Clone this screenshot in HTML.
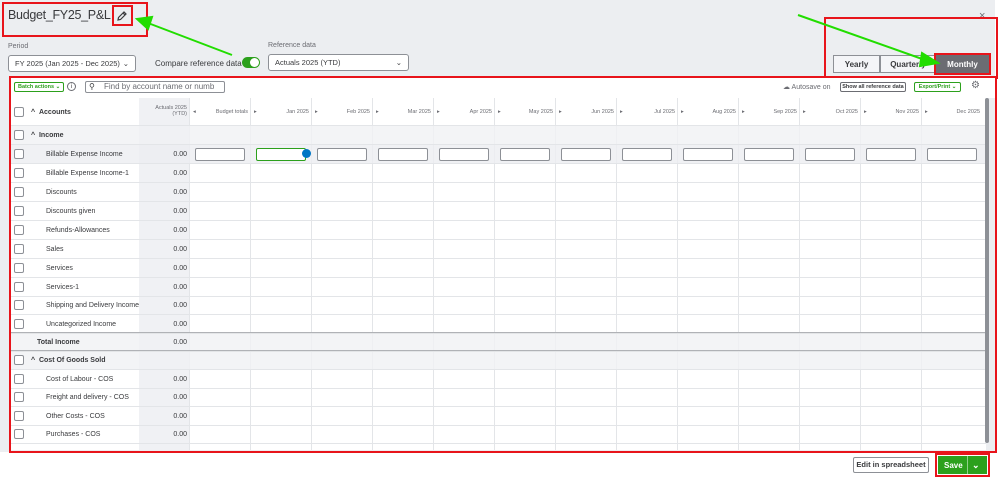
<!DOCTYPE html>
<html><head><meta charset="utf-8"><style>
*{box-sizing:border-box;margin:0;padding:0}
body{width:999px;height:479px;overflow:hidden;background:#fff;font-family:"Liberation Sans",sans-serif;color:#393a3d;position:relative}
.top{position:absolute;left:0;top:0;width:995px;height:452px;background:#eceef1}
.abs{position:absolute;white-space:nowrap}
.red{position:absolute;border:2px solid #e8141b}
.sel{border:1px solid #8d9096;background:#fff;border-radius:3px;font-size:7.5px;padding:0 6px;display:flex;align-items:center;justify-content:space-between;white-space:nowrap}
.lbl{font-size:7px;color:#6b6c72}
.grid{position:absolute;left:11px;top:98px;width:975px;height:352px;background:#fff;overflow:hidden}
.row{position:absolute;left:0;width:975px;height:19px;border-bottom:1px solid #e3e5e8;font-size:7px;white-space:nowrap}
.cb{position:absolute;left:3px;top:4px;width:10px;height:10px;border:1px solid #8d9096;border-radius:2px;background:#fff}
.vl{position:absolute;top:0;width:1px;height:352px;background:#e3e5e8}
.nm{position:absolute;left:35px;top:6px}
.val{position:absolute;left:128px;width:48px;text-align:right;top:6px}
.inp{position:absolute;top:3px;height:13px;width:50px;border:1px solid #8d9096;border-radius:2px;background:#fff}
.mh{position:absolute;top:11px;font-size:5.5px;color:#6b6c72;display:flex;justify-content:space-between;width:55px}
.btn{position:absolute;display:flex;align-items:center;justify-content:center;font-size:8px;font-weight:bold}
</style></head><body>
<div class="top"></div>
<div class="abs" style="left:8px;top:8px;font-size:12.5px;letter-spacing:-0.3px;color:#393a3d">Budget_FY25_P&amp;L</div>
<svg class="abs" style="left:116px;top:10px" width="12" height="12" viewBox="0 0 12 12"><path d="M2 10 L2.5 7.5 L8 2 L10 4 L4.5 9.5 Z M7 3 L9 5" fill="none" stroke="#393a3d" stroke-width="1.2"/></svg>
<div class="red" style="left:2px;top:2px;width:146px;height:35px"></div>
<div class="red" style="left:112px;top:5px;width:21px;height:21px"></div>
<div class="abs" style="left:979px;top:10px;font-size:11px;color:#6b6c72">×</div>
<div class="abs lbl" style="left:8px;top:43px">Period</div>
<div class="abs sel" style="left:8px;top:55px;width:128px;height:17px">FY 2025 (Jan 2025 - Dec 2025) <span>⌄</span></div>
<div class="abs" style="left:155px;top:59px;font-size:8px">Compare reference data</div>
<div class="abs" style="left:242px;top:57px;width:18px;height:11px;border-radius:6px;background:#2ca01c"><div style="position:absolute;right:1px;top:1px;width:9px;height:9px;border-radius:50%;background:#fff"></div></div>
<div class="abs lbl" style="left:268px;top:42px">Reference data</div>
<div class="abs sel" style="left:268px;top:54px;width:141px;height:17px">Actuals 2025 (YTD) <span>⌄</span></div>
<div class="red" style="left:824px;top:17px;width:174px;height:62px"></div>
<div class="btn" style="left:833px;top:55px;width:47px;height:18px;background:#f4f5f8;border:1px solid #8d9096">Yearly</div>
<div class="btn" style="left:880px;top:55px;width:56px;height:18px;background:#f4f5f8;border:1px solid #8d9096">Quarterly</div>
<div class="btn" style="left:936px;top:55px;width:53px;height:18px;background:#6b6c72;color:#fff;outline:2px solid #e8141b">Monthly</div>
<svg class="abs" style="left:0;top:0" width="999" height="479"><g stroke="#22dd00" stroke-width="2" fill="#22dd00">
<line x1="232" y1="55" x2="148" y2="23"/><polygon points="137,19 152,17 148,29"/>
<line x1="798" y1="15" x2="925" y2="60"/><polygon points="938,63 922,53 920,66"/>
<line x1="862" y1="381" x2="940" y2="438"/><polygon points="950,446 934,442 942,431"/></g></svg>
<div class="red" style="left:9px;top:76px;width:988px;height:377px"></div>
<div class="abs" style="left:11px;top:78px;width:984px;height:20px;background:#fff"></div>
<div class="abs" style="left:14px;top:82px;width:50px;height:10px;border:1px solid #2ca01c;border-radius:2px;font-size:5.5px;font-weight:bold;color:#2ca01c;padding:1px 3px">Batch actions ⌄</div>
<div class="abs" style="left:67px;top:82px;width:9px;height:9px;border:1px solid #6b6c72;border-radius:50%;font-size:6px;text-align:center;line-height:8px">i</div>
<div class="abs" style="left:85px;top:81px;width:140px;height:12px;border:1px solid #8d9096;border-radius:2px;font-size:8px;color:#6b6c72;padding-left:18px;line-height:10px;overflow:hidden">Find by account name or numb</div>
<div class="abs" style="left:89px;top:82px;font-size:8px">⚲</div>
<div class="abs" style="left:783px;top:83px;font-size:7px;color:#6b6c72">☁ Autosave on</div>
<div class="abs" style="left:840px;top:82px;width:66px;height:10px;border:1px solid #6b6c72;border-radius:2px;font-size:5.5px;font-weight:bold;text-align:center;line-height:8px">Show all reference data</div>
<div class="abs" style="left:914px;top:82px;width:47px;height:10px;border:1px solid #2ca01c;border-radius:2px;font-size:5.5px;font-weight:bold;color:#2ca01c;text-align:center;line-height:8px">Export/Print ⌄</div>
<div class="abs" style="left:971px;top:80px;font-size:10px;color:#6b6c72">⚙</div>
<div class="grid">
<div class="abs" style="left:128px;top:0;width:50px;height:352px;background:#f0f1f4"></div>
<div class="vl" style="left:178px"></div><div class="vl" style="left:239px"></div><div class="vl" style="left:300px"></div><div class="vl" style="left:361px"></div><div class="vl" style="left:422px"></div><div class="vl" style="left:483px"></div><div class="vl" style="left:544px"></div><div class="vl" style="left:605px"></div><div class="vl" style="left:666px"></div><div class="vl" style="left:727px"></div><div class="vl" style="left:788px"></div><div class="vl" style="left:849px"></div><div class="vl" style="left:910px"></div>
<div class="row" style="top:0;height:28px;background:transparent"><div class="cb" style="top:9px"></div><div class="nm" style="left:20px;top:11px;font-weight:bold">^ &nbsp;Accounts</div><div class="abs" style="left:128px;width:48px;top:7px;font-size:5.5px;color:#6b6c72;text-align:right">Actuals 2025<br>(YTD)</div>
<div class="mh" style="left:182px"><span>◂</span><span>Budget totals</span></div>
<div class="mh" style="left:243px"><span>▸</span><span>Jan 2025</span></div><div class="mh" style="left:304px"><span>▸</span><span>Feb 2025</span></div><div class="mh" style="left:365px"><span>▸</span><span>Mar 2025</span></div><div class="mh" style="left:426px"><span>▸</span><span>Apr 2025</span></div><div class="mh" style="left:487px"><span>▸</span><span>May 2025</span></div><div class="mh" style="left:548px"><span>▸</span><span>Jun 2025</span></div><div class="mh" style="left:609px"><span>▸</span><span>Jul 2025</span></div><div class="mh" style="left:670px"><span>▸</span><span>Aug 2025</span></div><div class="mh" style="left:731px"><span>▸</span><span>Sep 2025</span></div><div class="mh" style="left:792px"><span>▸</span><span>Oct 2025</span></div><div class="mh" style="left:853px"><span>▸</span><span>Nov 2025</span></div><div class="mh" style="left:914px"><span>▸</span><span>Dec 2025</span></div></div>
<div class="row" style="top:28px;background:rgba(240,241,244,.8)"><div class="cb"></div><div class="nm" style="left:20px;font-weight:bold">^ &nbsp;Income</div></div>
<div class="row" style="top:47px;background:rgba(236,238,241,.8)"><div class="cb"></div><div class="nm">Billable Expense Income</div><div class="val">0.00</div>
<div class="inp" style="left:184px"></div><div class="inp" style="left:245px;border:1.5px solid #2ca01c"></div><div style="position:absolute;left:291px;top:4px;width:9px;height:9px;border-radius:50%;background:#0077c5"></div><div class="inp" style="left:306px"></div><div class="inp" style="left:367px"></div><div class="inp" style="left:428px"></div><div class="inp" style="left:489px"></div><div class="inp" style="left:550px"></div><div class="inp" style="left:611px"></div><div class="inp" style="left:672px"></div><div class="inp" style="left:733px"></div><div class="inp" style="left:794px"></div><div class="inp" style="left:855px"></div><div class="inp" style="left:916px"></div></div>
<div class="row" style="top:66px"><div class="cb"></div><div class="nm">Billable Expense Income-1</div><div class="val">0.00</div></div>
<div class="row" style="top:85px"><div class="cb"></div><div class="nm">Discounts</div><div class="val">0.00</div></div>
<div class="row" style="top:104px"><div class="cb"></div><div class="nm">Discounts given</div><div class="val">0.00</div></div>
<div class="row" style="top:123px"><div class="cb"></div><div class="nm">Refunds-Allowances</div><div class="val">0.00</div></div>
<div class="row" style="top:142px"><div class="cb"></div><div class="nm">Sales</div><div class="val">0.00</div></div>
<div class="row" style="top:161px"><div class="cb"></div><div class="nm">Services</div><div class="val">0.00</div></div>
<div class="row" style="top:180px"><div class="cb"></div><div class="nm">Services-1</div><div class="val">0.00</div></div>
<div class="row" style="top:198px"><div class="cb"></div><div class="nm">Shipping and Delivery Income</div><div class="val">0.00</div></div>
<div class="row" style="top:217px;border-bottom:2px solid #b0b2b6"><div class="cb"></div><div class="nm">Uncategorized Income</div><div class="val">0.00</div></div>
<div class="row" style="top:235px;background:rgba(240,241,244,.8);border-bottom:2px solid #b0b2b6"><div class="nm" style="left:26px;font-weight:bold">Total Income</div><div class="val">0.00</div></div>
<div class="row" style="top:253px;background:rgba(240,241,244,.8)"><div class="cb"></div><div class="nm" style="left:20px;font-weight:bold">^ &nbsp;Cost Of Goods Sold</div></div>
<div class="row" style="top:272px"><div class="cb"></div><div class="nm">Cost of Labour - COS</div><div class="val">0.00</div></div>
<div class="row" style="top:290px"><div class="cb"></div><div class="nm">Freight and delivery - COS</div><div class="val">0.00</div></div>
<div class="row" style="top:309px"><div class="cb"></div><div class="nm">Other Costs - COS</div><div class="val">0.00</div></div>
<div class="row" style="top:327px"><div class="cb"></div><div class="nm">Purchases - COS</div><div class="val">0.00</div></div>
</div>
<div class="abs" style="left:985px;top:98px;width:4px;height:345px;background:#8d9096;border-radius:2px"></div>
<div class="abs" style="left:853px;top:457px;width:76px;height:16px;border:1px solid #8d9096;border-radius:2px;font-size:7.5px;text-align:center;line-height:14px;font-weight:bold;color:#393a3d">Edit in spreadsheet</div>
<div class="red" style="left:935px;top:453px;width:55px;height:24px"></div>
<div class="btn" style="left:938px;top:456px;width:49px;height:18px;background:#2ca01c;color:#fff;justify-content:flex-start;padding-left:6px">Save<span style="position:absolute;left:29px;top:0;width:1px;height:18px;background:#8fd08a"></span><span style="position:absolute;left:34px;font-size:9px">⌄</span></div>
</body></html>
